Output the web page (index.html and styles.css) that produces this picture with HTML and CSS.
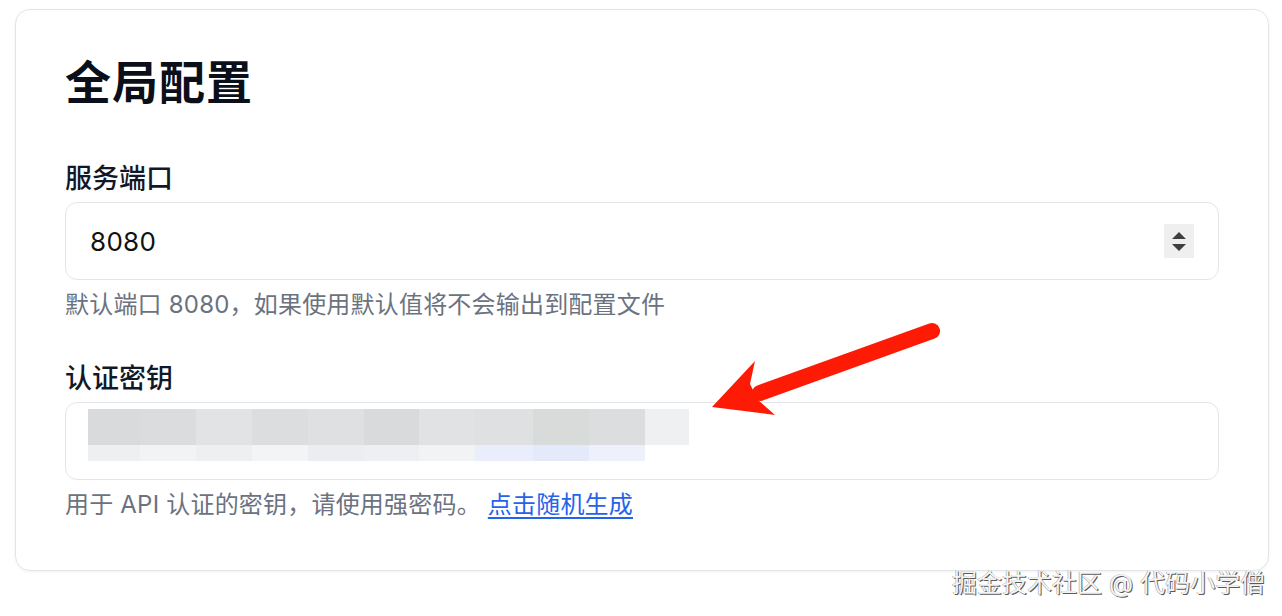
FILE: index.html
```html
<!DOCTYPE html>
<html lang="zh-CN">
<head>
<meta charset="utf-8">
<title>全局配置</title>
<link rel="stylesheet" href="styles.css">
</head>
<body>
<main class="page">
  <section class="card">
    <h1 class="title">全局配置</h1>
    <div class="field">
      <div class="label">服务端口</div>
      <div class="input">
        <span class="value">8080</span>
        <span class="spinner">
          <svg width="16" height="24" viewBox="0 0 16 24"><path d="M1 10 L8 3 L15 10 Z M1 15 L15 15 L8 22 Z" fill="#3f3f3f"/></svg>
        </span>
      </div>
      <p class="help">默认端口 8080，如果使用默认值将不会输出到配置文件</p>
    </div>
    <div class="field second">
      <div class="label">认证密钥</div>
      <div class="input secret">
        <div class="mosaic">
          <span class="col"><i></i><b></b></span>
          <span class="col"><i></i><b></b></span>
          <span class="col"><i></i><b></b></span>
          <span class="col"><i></i><b></b></span>
          <span class="col"><i></i><b></b></span>
          <span class="col"><i></i><b></b></span>
          <span class="col"><i></i><b></b></span>
          <span class="col"><i></i><b></b></span>
          <span class="col"><i></i><b></b></span>
          <span class="col"><i></i><b></b></span>
          <span class="col"><i></i><b></b></span>
        </div>
      </div>
      <p class="help">用于 API 认证的密钥，请使用强密码。 <a class="link" href="#">点击随机生成</a></p>
    </div>
  </section>
</main>
<svg class="arrow" width="1282" height="616" viewBox="0 0 1282 616">
  <line x1="932" y1="331" x2="760" y2="393" stroke="#fe1b06" stroke-width="16" stroke-linecap="round"/>
  <polygon points="712,407 755,361 750,384 758,400 775,415" fill="#fe1b06"/>
</svg>
<div class="watermark">掘金技术社区 @ 代码小学僧</div>
</body>
</html>
```
FILE: styles.css
```css
* { box-sizing: border-box; }
html, body { margin: 0; padding: 0; background: #ffffff; }
body {
  font-family: "Inter", "Noto Sans CJK SC", sans-serif;
  color: #111827;
  width: 1282px;
  height: 616px;
  overflow: hidden;
  position: relative;
}
.page {
  padding: 9px 13px 0 15px;
}
.card {
  width: 1254px;
  height: 562px;
  border: 1.5px solid #e3e4e7;
  border-radius: 15px;
  box-shadow: 0 1px 3px rgba(0,0,0,0.06);
  padding: 44px 49px 0 49px;
  display: flex;
  flex-direction: column;
}
.title {
  margin: 0;
  font-size: 46px;
  line-height: 56px;
  font-weight: 700;
  color: #0b0f1a;
  letter-spacing: 1px;
}
.field {
  display: flex;
  flex-direction: column;
  margin-top: 51px;
}
.field.second { margin-top: 40px; }
.label {
  font-size: 27px;
  line-height: 36px;
  font-weight: 500;
  color: #111827;
}
.input {
  margin-top: 5px;
  height: 78px;
  border: 1.5px solid #e4e5e8;
  border-radius: 12px;
  display: flex;
  align-items: center;
  justify-content: space-between;
  padding: 0 24px 0 24px;
}
.value {
  font-size: 26px;
  color: #111111;
  letter-spacing: 0.3px;
}
.spinner {
  width: 30px;
  height: 34px;
  background: #efefef;
  display: flex;
  align-items: center;
  justify-content: center;
}
.input.secret {
  align-items: flex-start;
  padding: 6px 0 0 22px;
}
.mosaic { display: flex; }
.col { display: flex; flex-direction: column; width: 56px; }
.col i { display: block; height: 36px; background: #dcdddf; }
.col b { display: block; height: 16px; background: #eff0f2; }
.col:nth-child(1) { width: 52px; }
.col:nth-child(1) i { background: #d9dadc; }
.col:nth-child(1) b { background: #eeeff1; }
.col:nth-child(2) i { background: #dbdcde; }
.col:nth-child(2) b { background: #f2f3f5; }
.col:nth-child(3) i { background: #e2e3e5; }
.col:nth-child(3) b { background: #eeeff1; }
.col:nth-child(4) i { background: #dcdddf; }
.col:nth-child(4) b { background: #f3f4f6; }
.col:nth-child(5) i { background: #dfe0e2; }
.col:nth-child(5) b { background: #ecedf0; }
.col:nth-child(6) { width: 55px; }
.col:nth-child(6) i { background: #d9dadc; }
.col:nth-child(6) b { background: #eeeff2; }
.col:nth-child(7) i { background: #e1e2e4; }
.col:nth-child(7) b { background: #f2f3f5; }
.col:nth-child(8) { width: 58px; }
.col:nth-child(8) i { background: #dfe0e2; }
.col:nth-child(8) b { background: #eaedfb; }
.col:nth-child(9) i { background: #d8dbd9; }
.col:nth-child(9) b { background: #e5eafb; }
.col:nth-child(10) i { background: #dcdddf; }
.col:nth-child(10) b { background: #eef1fc; }
.col:nth-child(11) { width: 44px; }
.col:nth-child(11) i { background: #eef0f1; }
.col:nth-child(11) b { background: #ffffff; }
.help {
  margin: 9px 0 0 0;
  font-size: 24px;
  line-height: 32px;
  color: #6b7280;
  letter-spacing: 0.2px;
}
.link {
  color: #2563eb;
  text-decoration: underline;
  text-underline-offset: 4px;
}
.arrow {
  position: absolute;
  left: 0;
  top: 0;
  pointer-events: none;
}
.watermark {
  position: absolute;
  left: 952px;
  top: 566px;
  font-size: 25px;
  line-height: 34px;
  color: #f4f4f4;
  text-shadow: 1px 1px 0 #5a5a5a, -0.5px -0.5px 0 #9a9a9a;
  white-space: nowrap;
}
```
